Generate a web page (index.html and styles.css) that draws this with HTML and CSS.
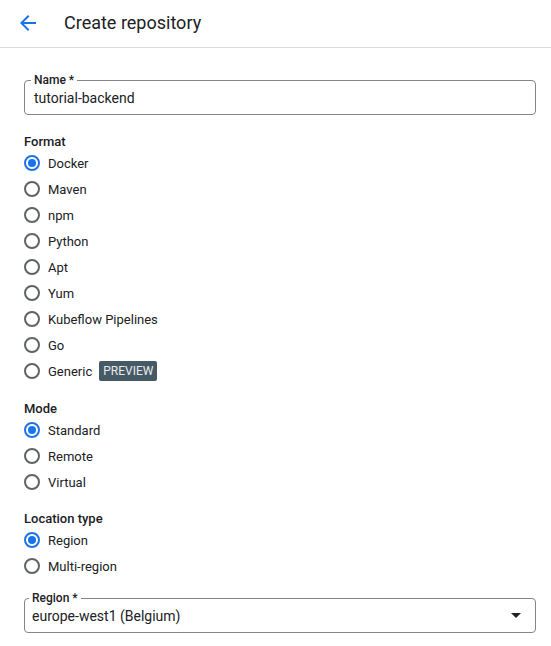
FILE: index.html
```html
<!DOCTYPE html>
<html>
<head>
<meta charset="utf-8">
<link rel="stylesheet" href="styles.css">
</head>
<body>
<header class="topbar">
  <svg class="back" width="24" height="24" viewBox="0 0 24 24"><path d="M20 11H7.83l5.59-5.59L12 4l-8 8 8 8 1.41-1.41L7.83 13H20v-2z" fill="#1a73e8"/></svg>
  <h1 class="title">Create repository</h1>
</header>
<main class="form">
  <div class="field name-field">
    <span class="field-label">Name *</span>
    <span class="field-value">tutorial-backend</span>
  </div>

  <section class="group format">
    <div class="group-title">Format</div>
    <label class="radio checked"><span class="dot"></span>Docker</label>
    <label class="radio"><span class="dot"></span>Maven</label>
    <label class="radio"><span class="dot"></span>npm</label>
    <label class="radio"><span class="dot"></span>Python</label>
    <label class="radio"><span class="dot"></span>Apt</label>
    <label class="radio"><span class="dot"></span>Yum</label>
    <label class="radio"><span class="dot"></span>Kubeflow Pipelines</label>
    <label class="radio"><span class="dot"></span>Go</label>
    <label class="radio"><span class="dot"></span>Generic<span class="badge">PREVIEW</span></label>
  </section>

  <section class="group">
    <div class="group-title">Mode</div>
    <label class="radio checked"><span class="dot"></span>Standard</label>
    <label class="radio"><span class="dot"></span>Remote</label>
    <label class="radio"><span class="dot"></span>Virtual</label>
  </section>

  <section class="group">
    <div class="group-title">Location type</div>
    <label class="radio checked"><span class="dot"></span>Region</label>
    <label class="radio"><span class="dot"></span>Multi-region</label>
  </section>

  <div class="field select-field">
    <span class="field-label">Region *</span>
    <span class="field-value">europe-west1 (Belgium)</span>
    <span class="caret"></span>
  </div>
</main>
</body>
</html>
```
FILE: styles.css
```css
* { box-sizing: border-box; }
html, body { margin: 0; padding: 0; background: #fff; }
body {
  font-family: Roboto, "Noto Sans", Arial, sans-serif;
  color: #202124;
  font-size: 14px;
}
.topbar {
  height: 48px;
  border-bottom: 1px solid #dadce0;
  display: flex;
  align-items: center;
  padding-left: 16px;
}
.back { display: block; margin-top: -2px; }
.title {
  margin: 0 0 0 24px;
  font-size: 18px;
  font-weight: 400;
  line-height: 24px;
  margin-top: -1px;
}
.form {
  padding: 32px 15px 0 24px;
}
.field {
  position: relative;
  height: 35px;
  border: 1px solid #80868b;
  border-radius: 4px;
  display: flex;
  align-items: center;
  padding-left: 9px;
  padding-top: 1px;
}
.field-label {
  position: absolute;
  top: -9px;
  left: 6px;
  padding: 0 3px;
  background: #fff;
  font-size: 12px;
  font-weight: 500;
  line-height: 16px;
}
.field-value { font-size: 14px; line-height: 20px; }
.select-field { margin-top: 19px; padding-left: 7px; }
.select-field .field-label { left: 4px; }
.caret {
  position: absolute;
  right: 14px;
  top: 14px;
  width: 0; height: 0;
  border-left: 5px solid transparent;
  border-right: 5px solid transparent;
  border-top: 5px solid #202124;
}
.group { margin-top: 16px; }
.format { margin-top: 19px; padding-bottom: 1px; }
.group-title {
  font-size: 13px;
  font-weight: 500;
  line-height: 16px;
  margin-bottom: 0;
}
.radio {
  display: flex;
  align-items: center;
  height: 26px;
  font-size: 13px;
}
.dot {
  width: 16px; height: 16px;
  border: 2px solid #5f6368;
  border-radius: 50%;
  margin-right: 8px;
  position: relative;
  flex: none;
}
.radio.checked .dot { border-color: #1a73e8; }
.radio.checked .dot::after {
  content: "";
  position: absolute;
  left: 2px; top: 2px;
  width: 8px; height: 8px;
  border-radius: 50%;
  background: #1a73e8;
}
.badge {
  margin-left: 7px;
  background: #455a64;
  color: #e8eaed;
  font-size: 12px;
  line-height: 20px;
  height: 20px;
  padding: 0 4px;
  border-radius: 2px;
}
```
